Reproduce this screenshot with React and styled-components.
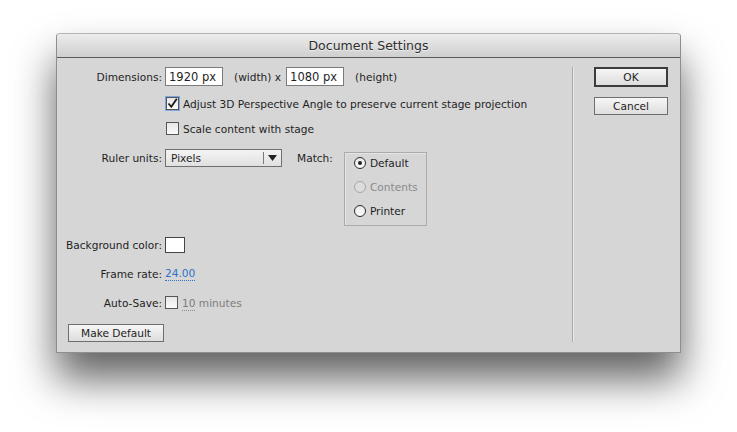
import React from 'react';
import styled, { createGlobalStyle } from 'styled-components';

const GlobalStyle = createGlobalStyle`
  html, body {
    margin: 0;
    padding: 0;
    background: #ffffff;
  }
  body {
    font-family: "DejaVu Sans", "Liberation Sans", sans-serif;
    font-size: 10.6px;
    color: #1e1e1e;
  }
`;

const App = () => {
  return (
    <Page>
      <GlobalStyle />
      <Window>
        <TitleBar>Document Settings</TitleBar>
        <Body>
          <Main>
            <Row>
              <Label>Dimensions:</Label>
              <TextInput>1920 px</TextInput>
              <Text style={{ marginLeft: 11 }}>(width) x</Text>
              <TextInput style={{ marginLeft: 5 }}>1080 px</TextInput>
              <Text style={{ marginLeft: 11 }}>(height)</Text>
            </Row>

            <Row $top={11}>
              <Indent />
              <CheckItem>
                <CheckBox $checked $focus>
                  <svg width="11" height="11" viewBox="0 0 11 11">
                    <path d="M1.5 5.5 L4.3 8.8 L9.8 0.8" fill="none" stroke="#1a1a1a" strokeWidth="1.8" />
                  </svg>
                </CheckBox>
                Adjust 3D Perspective Angle to preserve current stage projection
              </CheckItem>
            </Row>

            <Row $top={12}>
              <Indent />
              <CheckItem>
                <CheckBox />
                Scale content with stage
              </CheckItem>
            </Row>

            <Row $top={14} $align="flex-start">
              <Label $pad={3}>Ruler units:</Label>
              <Select>
                <SelectValue>Pixels</SelectValue>
                <SelectArrow>
                  <svg width="9" height="6" viewBox="0 0 9 6">
                    <path d="M0 0 H9 L4.5 6 Z" fill="#222" />
                  </svg>
                </SelectArrow>
              </Select>
              <Text style={{ marginLeft: 15, paddingTop: 3 }}>Match:</Text>
              <RadioGroup>
                <RadioItem>
                  <Radio $on />
                  Default
                </RadioItem>
                <RadioItem $disabled>
                  <Radio $disabled />
                  Contents
                </RadioItem>
                <RadioItem>
                  <Radio />
                  Printer
                </RadioItem>
              </RadioGroup>
            </Row>

            <Row $top={11}>
              <Label>Background color:</Label>
              <Swatch />
            </Row>

            <Row $top={14}>
              <Label>Frame rate:</Label>
              <HotText>24.00</HotText>
            </Row>

            <Row $top={15}>
              <Label>Auto-Save:</Label>
              <CheckItem $muted>
                <CheckBox />
                <span><HotText $muted>10</HotText> minutes</span>
              </CheckItem>
            </Row>

            <FooterRow>
              <Button>Make Default</Button>
            </FooterRow>
          </Main>

          <Separator />

          <Side>
            <Button $default $wide>OK</Button>
            <Button $wide>Cancel</Button>
          </Side>
        </Body>
      </Window>
    </Page>
  );
};

export default App;

const Page = styled.div`
  width: 737px;
  height: 432px;
  padding: 33px 0 0 56px;
  box-sizing: border-box;
  overflow: hidden;
`;

const Window = styled.div`
  width: 625px;
  height: 320px;
  box-sizing: border-box;
  background: #d6d6d6;
  border: 1px solid #8e8e8e;
  border-top-color: #b4b4b4;
  border-radius: 4px 4px 0 0;
  box-shadow: 0 26px 42px rgba(0, 0, 0, 0.62);
  display: flex;
  flex-direction: column;
  overflow: hidden;
`;

const TitleBar = styled.div`
  height: 23px;
  flex-shrink: 0;
  display: flex;
  align-items: center;
  justify-content: center;
  font-size: 12.5px;
  color: #2d2d2d;
  background: linear-gradient(#ececec, #cfcfcf);
  border-bottom: 1px solid #5a5a5a;
  text-shadow: 0 1px 0 rgba(255, 255, 255, 0.6);
`;

const Body = styled.div`
  flex: 1;
  display: flex;
  padding: 9px 0 10px 0;
`;

const Main = styled.div`
  width: 512px;
  display: flex;
  flex-direction: column;
`;

const Row = styled.div`
  display: flex;
  align-items: ${(p) => p.$align || 'center'};
  margin-top: ${(p) => p.$top || 0}px;
`;

const Label = styled.div`
  width: 108px;
  flex-shrink: 0;
  text-align: right;
  padding-right: 3px;
  padding-top: ${(p) => p.$pad || 0}px;
  box-sizing: border-box;
  white-space: nowrap;
`;

const Indent = styled.div`
  width: 109px;
  flex-shrink: 0;
`;

const Text = styled.span`
  white-space: nowrap;
`;

const TextInput = styled.div`
  width: 58px;
  height: 19px;
  box-sizing: border-box;
  background: #ffffff;
  border: 1px solid #7b7b7b;
  padding: 1px 3px 0;
  font-size: 11.5px;
  line-height: 16px;
  white-space: nowrap;
`;

const CheckItem = styled.div`
  display: flex;
  align-items: center;
  gap: 4px;
  white-space: nowrap;
  color: ${(p) => (p.$muted ? '#7d7d7d' : 'inherit')};
`;

const CheckBox = styled.span`
  width: 13px;
  height: 13px;
  box-sizing: border-box;
  border: 1px solid #555;
  background: linear-gradient(#e6e6e6, #fbfbfb);
  display: inline-flex;
  align-items: center;
  justify-content: center;
  box-shadow: ${(p) => (p.$focus ? '0 0 0 1px #7aa7e0' : 'none')};
`;

const Select = styled.div`
  width: 117px;
  height: 18px;
  box-sizing: border-box;
  border: 1px solid #6f6f6f;
  background: linear-gradient(#f4f4f4, #e0e0e0);
  display: flex;
  align-items: center;
`;

const SelectValue = styled.div`
  flex: 1;
  padding-left: 5px;
`;

const SelectArrow = styled.div`
  width: 17px;
  height: 12px;
  border-left: 1px solid #7a7a7a;
  display: flex;
  align-items: center;
  justify-content: center;
`;

const RadioGroup = styled.div`
  margin-left: 11px;
  margin-top: 3px;
  width: 83px;
  height: 74px;
  box-sizing: border-box;
  border: 1px solid #ababab;
  box-shadow: inset 1px 1px 0 #e4e4e4;
  padding: 3px 0 0 9px;
  display: flex;
  flex-direction: column;
  gap: 11px;
`;

const RadioItem = styled.div`
  display: flex;
  align-items: center;
  gap: 4px;
  height: 13px;
  color: ${(p) => (p.$disabled ? '#8a8a8a' : 'inherit')};
`;

const Radio = styled.span`
  position: relative;
  width: 12px;
  height: 12px;
  box-sizing: border-box;
  border-radius: 50%;
  border: 1px solid ${(p) => (p.$disabled ? '#a6a6a6' : '#2b2b2b')};
  background: ${(p) => (p.$disabled ? '#dcdcdc' : 'linear-gradient(#e8e8e8, #fdfdfd)')};

  &::after {
    content: '';
    display: ${(p) => (p.$on ? 'block' : 'none')};
    position: absolute;
    left: 3px;
    top: 3px;
    width: 4px;
    height: 4px;
    border-radius: 50%;
    background: #222;
  }
`;

const Swatch = styled.div`
  width: 20px;
  height: 16px;
  box-sizing: border-box;
  background: #ffffff;
  border: 1px solid #444;
`;

const HotText = styled.span`
  color: ${(p) => (p.$muted ? '#7d7d7d' : '#2c74c8')};
  border-bottom: 1px dotted ${(p) => (p.$muted ? '#8a8a8a' : '#2c74c8')};
  padding-bottom: 1px;
`;

const FooterRow = styled.div`
  margin-top: auto;
  padding-left: 11px;
  display: flex;
`;

const Button = styled.div`
  width: ${(p) => (p.$wide ? '74px' : '96px')};
  height: ${(p) => (p.$default ? '20px' : '18px')};
  box-sizing: border-box;
  display: flex;
  align-items: center;
  justify-content: center;
  border: ${(p) => (p.$default ? '2px solid #3c3c3c' : '1px solid #6e6e6e')};
  background: linear-gradient(#f6f6f6, #dedede);
  color: #222;
  white-space: nowrap;
`;

const Separator = styled.div`
  width: 1px;
  background: #a9a9a9;
  box-shadow: 1px 0 0 #e8e8e8;
  margin: 0 0 0 3px;
`;

const Side = styled.div`
  display: flex;
  flex-direction: column;
  gap: 10px;
  padding-left: 21px;
`;
